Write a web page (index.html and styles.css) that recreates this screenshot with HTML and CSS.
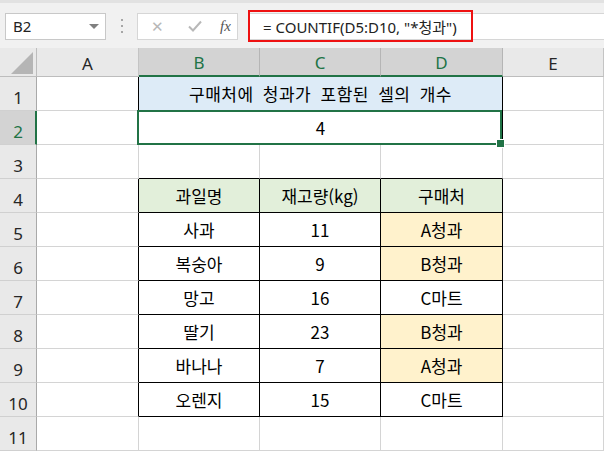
FILE: index.html
```html
<!DOCTYPE html>
<html lang="ko">
<head>
  <meta charset="UTF-8">
  <title>COUNTIF 청과</title>
  <link rel="stylesheet" href="styles.css">
</head>
<body>
  <!-- Formula bar -->
  <div class="toolbar">
    <div class="namebox">
      <span>B2</span>
      <span class="caret"></span>
    </div>
    <div class="grip"><i></i><i></i><i></i></div>
    <div class="buttons">
      <span class="btn cancel">&#x2715;</span>
      <span class="btn ok">
        <svg width="16" height="14" viewBox="0 0 16 14"><path d="M2 7.5 L6 11.5 L14 2.5" fill="none" stroke="#b8b8b8" stroke-width="2"/></svg>
      </span>
      <span class="btn fx">fx</span>
    </div>
    <div class="formula">
      <span class="mark">= COUNTIF(D5:D10, "*청과")</span>
    </div>
  </div>

  <!-- Sheet -->
  <div class="sheet">
    <div class="corner">
      <svg width="22" height="22" viewBox="0 0 22 22"><polygon points="22,0 22,22 0,22" fill="#b5b5b5"/></svg>
    </div>
    <div class="colhd">A</div>
    <div class="colhd on">B</div>
    <div class="colhd on">C</div>
    <div class="colhd on">D</div>
    <div class="colhd">E</div>

    <div class="rowhd">1</div>
    <div class="cell edge"></div>
    <div class="cell title">구매처에 청과가 포함된 셀의 개수</div>
    <div class="cell"></div>

    <div class="rowhd on">2</div>
    <div class="cell edge"></div>
    <div class="cell result">4</div>
    <div class="cell"></div>

    <div class="rowhd">3</div>
    <div class="cell"></div>
    <div class="cell top"></div>
    <div class="cell top"></div>
    <div class="cell top"></div>
    <div class="cell"></div>

    <div class="rowhd">4</div>
    <div class="cell edge"></div>
    <div class="cell t head">과일명</div>
    <div class="cell t head">재고량(kg)</div>
    <div class="cell t head">구매처</div>
    <div class="cell"></div>

    <div class="rowhd">5</div>
    <div class="cell edge"></div>
    <div class="cell t">사과</div>
    <div class="cell t">11</div>
    <div class="cell t hit">A청과</div>
    <div class="cell"></div>

    <div class="rowhd">6</div>
    <div class="cell edge"></div>
    <div class="cell t">복숭아</div>
    <div class="cell t">9</div>
    <div class="cell t hit">B청과</div>
    <div class="cell"></div>

    <div class="rowhd">7</div>
    <div class="cell edge"></div>
    <div class="cell t">망고</div>
    <div class="cell t">16</div>
    <div class="cell t">C마트</div>
    <div class="cell"></div>

    <div class="rowhd">8</div>
    <div class="cell edge"></div>
    <div class="cell t">딸기</div>
    <div class="cell t">23</div>
    <div class="cell t hit">B청과</div>
    <div class="cell"></div>

    <div class="rowhd">9</div>
    <div class="cell edge"></div>
    <div class="cell t">바나나</div>
    <div class="cell t">7</div>
    <div class="cell t hit">A청과</div>
    <div class="cell"></div>

    <div class="rowhd">10</div>
    <div class="cell edge"></div>
    <div class="cell t">오렌지</div>
    <div class="cell t">15</div>
    <div class="cell t">C마트</div>
    <div class="cell"></div>

    <div class="rowhd">11</div>
    <div class="cell"></div>
    <div class="cell"></div>
    <div class="cell"></div>
    <div class="cell"></div>
    <div class="cell"></div>
  </div>
</body>
</html>
```

FILE: styles.css
```css
* {
  box-sizing: border-box;
}

body {
  margin: 0;
  width: 604px;
  height: 452px;
  overflow: hidden;
  background: #ffffff;
  font-family: "Noto Sans", "Noto Sans CJK KR", sans-serif;
}

/* Formula bar */
.toolbar {
  height: 48px;
  background: #f1f1f1;
  border-top: 3px solid #e2e2e2;
  display: flex;
  align-items: center;
  padding-top: 1px;
}

.namebox {
  margin-left: 5px;
  width: 101px;
  height: 27px;
  background: #fff;
  border: 1px solid #c8c8c8;
  display: flex;
  align-items: center;
  justify-content: space-between;
  padding: 0 6px 0 7px;
  font-size: 15px;
  color: #222;
}

.caret {
  width: 0;
  height: 0;
  border-left: 5px solid transparent;
  border-right: 5px solid transparent;
  border-top: 5px solid #808080;
}

.grip {
  width: 31px;
  display: flex;
  flex-direction: column;
  align-items: center;
  gap: 4px;
}

.grip i {
  width: 2px;
  height: 2px;
  background: #a6a6a6;
}

.buttons {
  width: 101px;
  height: 27px;
  background: #fff;
  border: 1px solid #d6d6d6;
  display: flex;
  align-items: center;
  padding-left: 12px;
}

.btn {
  display: flex;
  align-items: center;
  justify-content: center;
}

.cancel {
  width: 14px;
  font-size: 15px;
  color: #b8b8b8;
}

.ok {
  width: 18px;
  margin-left: 22px;
}

.fx {
  margin-left: 16px;
  font-family: "Liberation Serif", serif;
  font-style: italic;
  font-size: 15px;
  color: #555;
}

.formula {
  flex: 1;
  height: 27px;
  margin-left: 10px;
  background: #fff;
  border-top: 1px solid #d6d6d6;
  border-bottom: 1px solid #d6d6d6;
  display: flex;
  align-items: center;
}

.mark {
  flex: none;
  width: 225px;
  height: 32px;
  border: 2px solid #ee1111;
  padding-left: 13px;
  display: flex;
  align-items: center;
  font-size: 15px;
  color: #222;
  white-space: nowrap;
}

/* Sheet grid */
.sheet {
  display: grid;
  grid-template-columns: 37px 102px 121px 121px 122px 1fr;
  grid-template-rows: 29px repeat(11, 34px);
}

.corner {
  background: #e9e9e9;
  border-right: 1px solid #bdbdbd;
  border-bottom: 1px solid #bdbdbd;
  display: flex;
  align-items: flex-end;
  justify-content: flex-end;
  padding: 0 3px 2px 0;
}

.colhd {
  background: #e9e9e9;
  border-right: 1px solid #c4c4c4;
  border-bottom: 1px solid #bdbdbd;
  display: flex;
  align-items: center;
  justify-content: center;
  padding-top: 2px;
  font-size: 17px;
  color: #262626;
}

.colhd.on {
  background: #d3d3d3;
  color: #217346;
  border-bottom: 2px solid #217346;
  border-right-color: #b5b5b5;
}

.rowhd {
  grid-column: 1;
  background: #e9e9e9;
  border-right: 1px solid #a9a9a9;
  border-bottom: 1px solid #d0d0d0;
  display: flex;
  align-items: flex-end;
  justify-content: center;
  padding-bottom: 2px;
  font-size: 17px;
  line-height: 20px;
  color: #262626;
}

.rowhd.on {
  background: #d3d3d3;
  color: #217346;
  border-right: 2px solid #217346;
  padding-left: 1px;
}

.cell {
  border-right: 1px solid #d4d4d4;
  border-bottom: 1px solid #d4d4d4;
  display: flex;
  align-items: flex-end;
  justify-content: center;
  padding-bottom: 6px;
  font-family: "Noto Sans CJK KR", sans-serif;
  font-size: 17px;
  line-height: 20px;
  color: #000;
  white-space: nowrap;
}

.edge {
  border-right-color: #000;
}

.title {
  grid-column: span 3;
  background: #ddebf7;
  border-right-color: #000;
  border-bottom-color: #000;
  letter-spacing: 0.5px;
  word-spacing: 4px;
}

.result {
  grid-column: span 3;
  position: relative;
  border-right-color: #000;
}

/* active cell outline and fill handle */
.result::after {
  content: "";
  position: absolute;
  left: -2px;
  top: -1px;
  right: 0;
  bottom: -1px;
  border: 2px solid #217346;
}

.result::before {
  content: "";
  position: absolute;
  right: -3px;
  bottom: -4px;
  width: 7px;
  height: 7px;
  background: #217346;
  border: 1px solid #fff;
  z-index: 2;
}

.top {
  border-bottom-color: #000;
}

.t {
  border-right-color: #000;
  border-bottom-color: #000;
}

.head {
  background: #e2efda;
}

.hit {
  background: #fff2cc;
}
```
